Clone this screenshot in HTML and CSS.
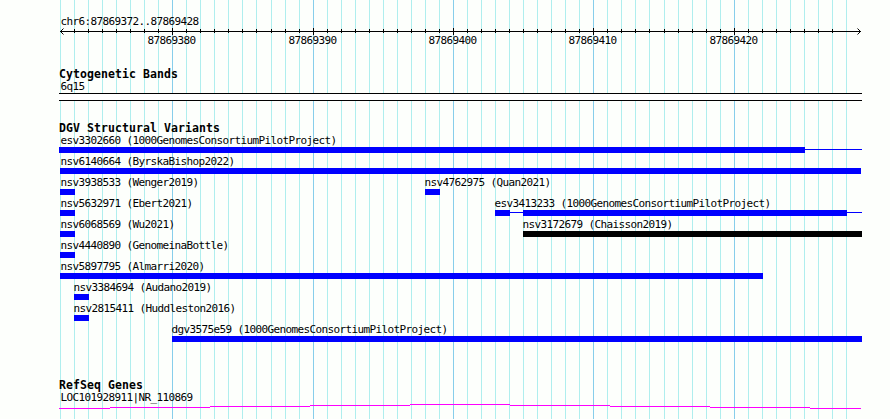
FILE: index.html
```html
<!DOCTYPE html>
<html lang="en">
<head>
    <meta charset="UTF-8">
    <title>chr6:87869372..87869428</title>
    <link rel="stylesheet" href="styles.css">
</head>
<body>
    <!-- Grid lines, one per base, drawn behind the tracks -->
    <svg class="gridlines" id="gridlines" width="890" height="419" shape-rendering="crispEdges"></svg>

    <main class="browser">
        <header class="overview">
            <div class="label">chr6:87869372..87869428</div>
            <svg class="ruler" id="ruler" width="803" height="20">
                <path class="axis" d="M1 3.5H802" shape-rendering="crispEdges"/>
                <path class="arrow" d="M4.5 0.5L1.5 3.5L4.5 6.5M798.5 0.5L801.5 3.5L798.5 6.5"/>
                <text x="88.5" y="16">87869380</text>
                <text x="229.5" y="16">87869390</text>
                <text x="369.5" y="16">87869400</text>
                <text x="509.5" y="16">87869410</text>
                <text x="650.5" y="16">87869420</text>
            </svg>
        </header>

        <section class="track cytobands">
            <h2>Cytogenetic Bands</h2>
            <div class="label">6q15</div>
            <div class="band"></div>
        </section>

        <section class="track variants">
            <h2>DGV Structural Variants</h2>
            <div class="row">
                <div class="feature" style="width: 803px">
                    <div class="label">esv3302660 (1000GenomesConsortiumPilotProject)</div>
                    <div class="bars"><i class="bar" style="width: 746px"></i><i class="link"></i></div>
                </div>
            </div>
            <div class="row">
                <div class="feature inset" style="margin-left: 1px; width: 801px">
                    <div class="label">nsv6140664 (ByrskaBishop2022)</div>
                    <div class="bars"><i class="bar" style="width: 801px"></i></div>
                </div>
            </div>
            <div class="row">
                <div class="feature inset" style="margin-left: 1px; width: 15px">
                    <div class="label">nsv3938533 (Wenger2019)</div>
                    <div class="bars"><i class="bar" style="width: 15px"></i></div>
                </div>
                <div class="feature shifted" style="margin-left: 350px; width: 15px">
                    <div class="label">nsv4762975 (Quan2021)</div>
                    <div class="bars"><i class="bar" style="width: 15px"></i></div>
                </div>
            </div>
            <div class="row">
                <div class="feature inset" style="margin-left: 1px; width: 15px">
                    <div class="label">nsv5632971 (Ebert2021)</div>
                    <div class="bars"><i class="bar" style="width: 15px"></i></div>
                </div>
                <div class="feature shifted" style="margin-left: 420px; width: 367px">
                    <div class="label">esv3413233 (1000GenomesConsortiumPilotProject)</div>
                    <div class="bars"><i class="bar" style="width: 15px"></i><i class="link"></i><i class="bar" style="width: 324px"></i><i class="link end"></i></div>
                </div>
            </div>
            <div class="row">
                <div class="feature inset" style="margin-left: 1px; width: 15px">
                    <div class="label">nsv6068569 (Wu2021)</div>
                    <div class="bars"><i class="bar" style="width: 15px"></i></div>
                </div>
                <div class="feature shifted" style="margin-left: 448px; width: 339px">
                    <div class="label">nsv3172679 (Chaisson2019)</div>
                    <div class="bars"><i class="bar black" style="width: 339px"></i></div>
                </div>
            </div>
            <div class="row">
                <div class="feature inset" style="margin-left: 1px; width: 15px">
                    <div class="label">nsv4440890 (GenomeinaBottle)</div>
                    <div class="bars"><i class="bar" style="width: 15px"></i></div>
                </div>
            </div>
            <div class="row">
                <div class="feature inset" style="margin-left: 1px; width: 703px">
                    <div class="label">nsv5897795 (Almarri2020)</div>
                    <div class="bars"><i class="bar" style="width: 703px"></i></div>
                </div>
            </div>
            <div class="row">
                <div class="feature shifted" style="margin-left: 15px; width: 15px">
                    <div class="label">nsv3384694 (Audano2019)</div>
                    <div class="bars"><i class="bar" style="width: 15px"></i></div>
                </div>
            </div>
            <div class="row">
                <div class="feature shifted" style="margin-left: 15px; width: 15px">
                    <div class="label">nsv2815411 (Huddleston2016)</div>
                    <div class="bars"><i class="bar" style="width: 15px"></i></div>
                </div>
            </div>
            <div class="row">
                <div class="feature shifted" style="margin-left: 113px; width: 690px">
                    <div class="label">dgv3575e59 (1000GenomesConsortiumPilotProject)</div>
                    <div class="bars"><i class="bar" style="width: 690px"></i></div>
                </div>
            </div>
        </section>

        <section class="track genes">
            <h2>RefSeq Genes</h2>
            <div class="label">LOC101928911|NR_110869</div>
            <svg class="intron" width="803" height="5" shape-rendering="crispEdges">
                <path d="M0 4.5H51M51 3.5H151M151 2.5H251M251 1.5H351M351 0.5H451M451 1.5H551M551 2.5H651M651 3.5H751M751 4.5H802"/>
            </svg>
        </section>
    </main>

    <script src="script.js"></script>
</body>
</html>
```

FILE: styles.css
```css
* {
    margin: 0;
    padding: 0;
    box-sizing: border-box;
}

body {
    height: 419px;
    overflow: hidden;
    background: #fdfffc;
    color: #000;
    font: 11px/13px "DejaVu Sans Mono", monospace;
    letter-spacing: -0.62px;
}

.gridlines {
    position: absolute;
    top: 0;
    left: 0;
    z-index: -1;
}

.gridlines .minor {
    stroke: #afeeee;
}

.gridlines .major {
    stroke: #87ceeb;
}

.browser {
    width: 803px;
    margin-left: 59px;
    padding-top: 15px;
}

svg {
    display: block;
}

.label {
    height: 13px;
    padding-left: 1.4px;
    white-space: nowrap;
}

/* Ruler */
.ruler path {
    fill: none;
    stroke: #000;
}

/* Tracks */
.track h2 {
    height: 12px;
    font-size: 11.5px;
    line-height: 13px;
    letter-spacing: 0.08px;
}

.cytobands {
    margin-top: 20px;
}

.band {
    height: 8px;
    background: #fff;
    border-top: 1px solid #000;
    border-bottom: 1px solid #000;
}

.variants {
    margin-top: 21px;
}

.row {
    display: flex;
    height: 21px;
}

.feature {
    flex: none;
}

.inset .label {
    padding-left: 0.4px;
}

.shifted .label {
    padding-left: 0;
    margin-left: -0.6px;
}

.bars {
    display: flex;
    height: 6px;
}

.bar {
    flex: none;
    height: 6px;
    background: #00f;
}

.bar.black {
    background: #000;
}

.link {
    flex: 1;
    height: 1px;
    margin-top: 2px;
    background: #00f;
}

.link.end {
    flex: none;
    width: 15px;
}

/* RefSeq Genes */
.genes {
    margin-top: 35px;
}

.intron path {
    fill: none;
    stroke: #f0f;
}
```

FILE: script.js
```js
const gridlines = document.getElementById('gridlines');
const ruler = document.getElementById('ruler');
const ns = 'http://www.w3.org/2000/svg';

function addPath(parent, className, d) {
    const path = document.createElementNS(ns, 'path');
    path.setAttribute('class', className);
    path.setAttribute('shape-rendering', 'crispEdges');
    path.setAttribute('d', d);
    parent.appendChild(path);
}

// 57 bases, 87869372 to 87869428
for (let i = 0; i <= 56; i++) {
    // two columns are one pixel wider than the rest
    const x = 60.5 + i * 14 + (i >= 15 ? 1 : 0) + (i >= 43 ? 1 : 0);
    const major = (i + 2) % 10 === 0;

    addPath(gridlines, major ? 'major' : 'minor', `M${x} 0V419`);
    if (i > 0 && i < 56) {
        addPath(ruler, 'tick', `M${x - 59} ${major ? '0V7' : '1V5'}`);
    }
}
```
